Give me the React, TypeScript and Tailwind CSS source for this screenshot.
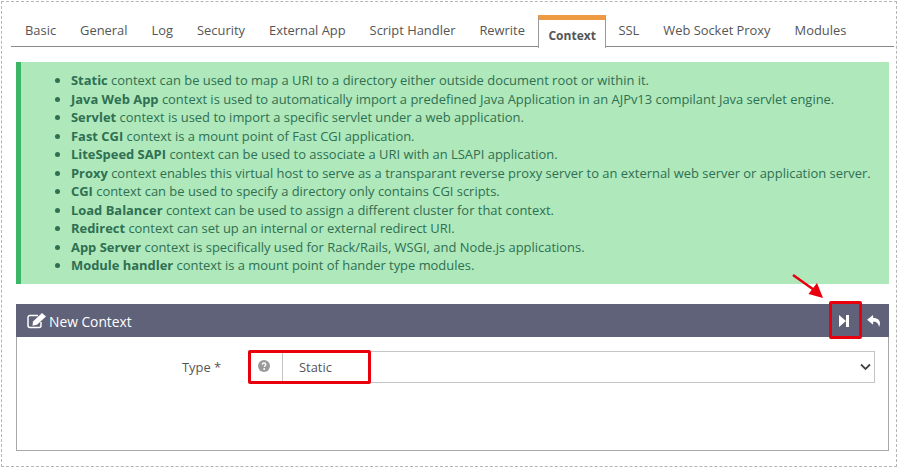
const tabs = ['Basic', 'General', 'Log', 'Security', 'External App', 'Script Handler', 'Rewrite', 'Context', 'SSL', 'Web Socket Proxy', 'Modules'];

const notes: [string, string][] = [
  ['Static', 'context can be used to map a URI to a directory either outside document root or within it.'],
  ['Java Web App', 'context is used to automatically import a predefined Java Application in an AJPv13 compilant Java servlet engine.'],
  ['Servlet', 'context is used to import a specific servlet under a web application.'],
  ['Fast CGI', 'context is a mount point of Fast CGI application.'],
  ['LiteSpeed SAPI', 'context can be used to associate a URI with an LSAPI application.'],
  ['Proxy', 'context enables this virtual host to serve as a transparant reverse proxy server to an external web server or application server.'],
  ['CGI', 'context can be used to specify a directory only contains CGI scripts.'],
  ['Load Balancer', 'context can be used to assign a different cluster for that context.'],
  ['Redirect', 'context can set up an internal or external redirect URI.'],
  ['App Server', 'context is specifically used for Rack/Rails, WSGI, and Node.js applications.'],
  ['Module handler', 'context is a mount point of hander type modules.'],
];

export default function App() {
  return (
    <div className="relative h-[469px] w-[900px] overflow-hidden bg-white font-['Open_Sans',sans-serif] text-[13px] text-[#555]">
      <div className="mx-px mt-px flex h-[466px] w-[896px] flex-col border border-dashed border-[#b5b5b5] pl-[9px] pr-[2px] pt-[13px]">
        <ul className="flex h-[32px] border-b-[1.5px] border-[#8a8a8a] pl-[2px]">
          {tabs.map((tab) =>
            tab === 'Context' ? (
              <li key={tab} className="-mb-[1.5px] ml-px flex h-[33px] items-center border-x border-t-[5px] border-x-[#999] border-t-[#ed9a43] bg-white px-[9.5px] pt-[3px] text-[12px] font-bold text-[#555]">
                {tab}
              </li>
            ) : (
              <li key={tab} className="px-[12px] pt-[6px] text-[12.9px] leading-[18px] text-[#555]">
                {tab}
              </li>
            ),
          )}
        </ul>

        <div className="ml-[5px] mr-[5px] mt-[15px] h-[222px] border-l-[5px] border-[#3cb664] bg-[#aee8bb] pl-[50px] pt-[9px]">
          <ul className="list-disc text-[12.93px] leading-[18.5px] text-[#2f6f52]">
            {notes.map(([name, text]) => (
              <li key={name} className="whitespace-nowrap">
                <b>{name}</b> {text}
              </li>
            ))}
          </ul>
        </div>

        <section className="ml-[5px] mr-[5px] mt-[20px] flex h-[147px] flex-col border border-t-0 border-[#a8a8a8]">
          <header className="-mx-px flex h-[33px] items-center justify-between bg-[#5f6279] pl-[11px] pr-[8px] text-[13.8px] text-white">
            <div className="flex items-center gap-[3px]">
              <svg width="19" height="16" viewBox="0 0 19 16" fill="none">
                <path d="M14 9v3.500a2 2 0 0 1-2 2H3a2 2 0 0 1-2-2V4.500a2 2 0 0 1 2-2h8" stroke="#fff" strokeWidth="1.500" />
                <path d="M6 8.500 15 0l4 3.400-9 8.400-4.500 1Z" fill="#fff" />
              </svg>
              <span className="pt-[3px]">New Context</span>
            </div>
            <div className="flex items-center gap-[18px] pt-[1px]">
              <svg width="10" height="12" viewBox="0 0 10 12">
                <path d="M0 0 7 6 0 12Z M7 0h3v12H7Z" fill="#fff" />
              </svg>
              <svg width="14" height="12" viewBox="0 0 15 13">
                <path d="M6.500 0 0 5.200l6.500 5.300V7.400c3.800-.2 5.600 1.300 6.500 5.600 2.800-6.300-.8-9.800-6.500-10Z" fill="#fff" />
              </svg>
            </div>
          </header>
          <div className="flex pl-[165px] pr-[13px] pt-[14px]">
            <label className="w-[66px] pt-[7px] text-[12.9px] leading-[18px] text-[#555]">Type *</label>
            <div className="flex h-[32px] flex-1 items-center border border-[#c4c4c4]">
              <div className="flex h-full w-[34px] items-center justify-center border-r border-[#c4c4c4] pb-[2px] pr-[3px]">
                <svg width="12" height="12" viewBox="0 0 12 12">
                  <circle cx="6" cy="6" r="6" fill="#9a9a9a" />
                  <path d="M4.200 4.600C4.300 3.600 5 3 6 3c1.100 0 1.800.7 1.800 1.500 0 1.300-1.500 1.200-1.500 2.500" stroke="#fff" strokeWidth="1.300" fill="none" />
                  <circle cx="6.200" cy="9" r=".9" fill="#fff" />
                </svg>
              </div>
              <span className="flex-1 pl-[16px] pt-[1px] text-[12.9px] text-[#555]">Static</span>
              <svg className="mr-[3px]" width="11" height="8" viewBox="0 0 11 8" fill="none">
                <path d="m1 1.500 4.500 4.500L10 1.500" stroke="#444" strokeWidth="1.800" />
              </svg>
            </div>
          </div>
        </section>
      </div>

      {/* red annotations from the screenshot */}
      <div className="absolute left-[248px] top-[350px] h-[34px] w-[123px] rounded-[2px] border-[3px] border-[#e8000d]" />
      <div className="absolute left-[829px] top-[301px] h-[38px] w-[33px] rounded-[2px] border-[3px] border-[#e8000d]" />
      <svg className="absolute left-[790px] top-[272px]" width="36" height="28" viewBox="0 0 36 28" fill="none">
        <path d="M3 3 27 20" stroke="#e8000d" strokeWidth="2.500" />
        <path d="M33 26 18.500 22 27 11Z" fill="#e8000d" />
      </svg>
    </div>
  );
}
